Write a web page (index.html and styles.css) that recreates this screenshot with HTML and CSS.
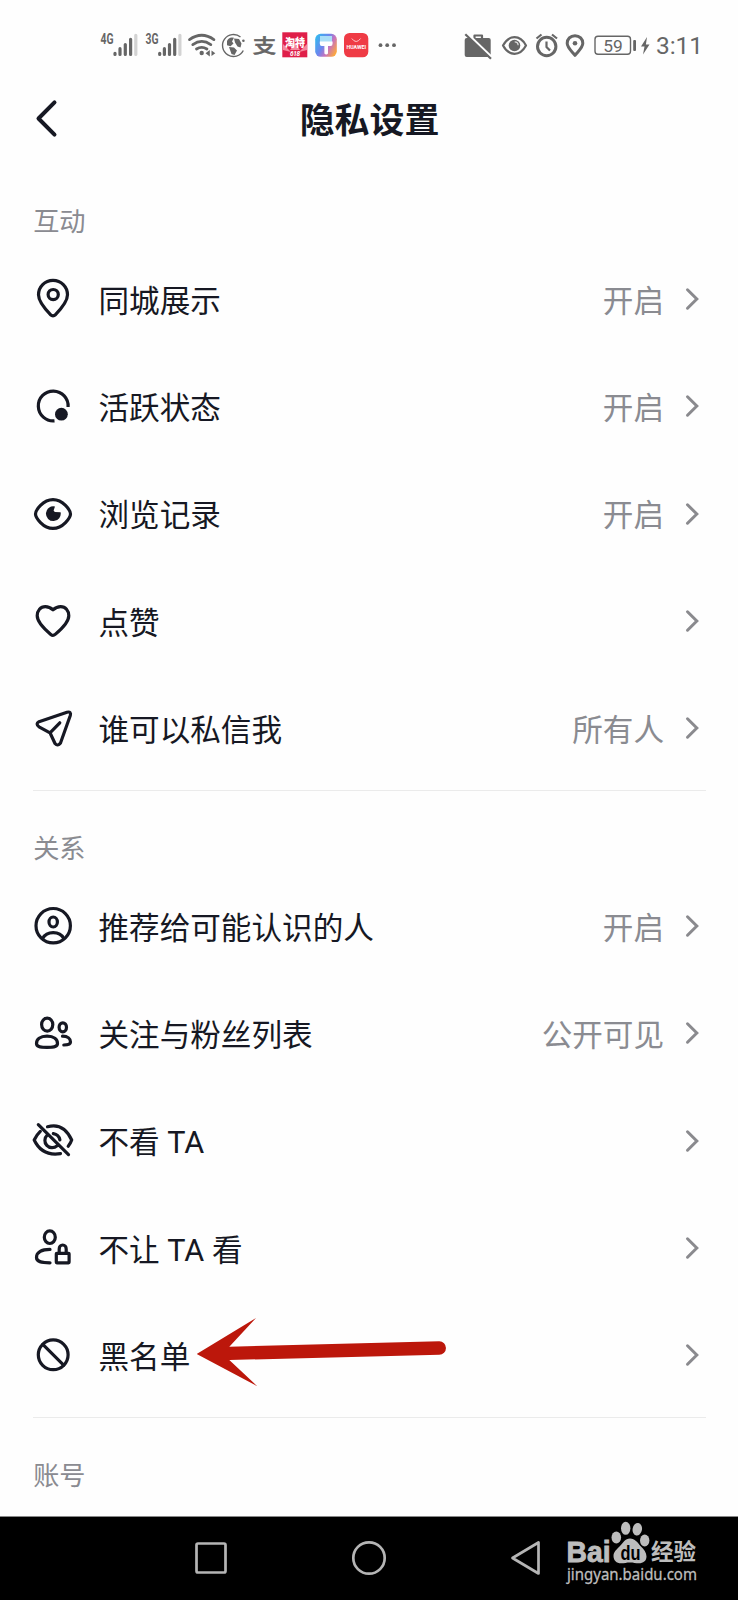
FILE: index.html
```html
<!DOCTYPE html>
<html lang="zh-CN">
<head>
<meta charset="utf-8">
<title>隐私设置</title>
<link rel="stylesheet" href="styles.css">
</head>
<body>
<div class="screen">
  <div class="status-bar">
    <svg class="status-left" viewBox="96 25 304 40" aria-hidden="true">
      <defs>
        <linearGradient id="brush" x1="0" y1="0.2" x2="1" y2="0.8">
          <stop offset="0" stop-color="#35b7ee"/><stop offset=".4" stop-color="#6b86ee"/><stop offset=".65" stop-color="#c873bd"/><stop offset="1" stop-color="#ffab35"/>
        </linearGradient>
      </defs>
      <g class="status-small">
        <text x="100.5" y="44" textLength="13" lengthAdjust="spacingAndGlyphs">4G</text>
        <text x="145.5" y="44" textLength="13" lengthAdjust="spacingAndGlyphs">3G</text>
      </g>
      <g class="bars">
        <path d="M115 53.3v1.2M120 48.7v5.8M125.3 44.5v10M130.6 39.3v15.2M159.7 53.3v1.2M164.4 48.7v5.8M169.5 44.5v10M174.7 39.3v15.2"/>
        <path class="bar-off" d="M135.8 35.3v19.2M179.9 35.3v19.2"/>
      </g>
      <path class="wifi" d="M189.5 39.6q12.2-8.6 24.4 0M192.8 44.6q9-6.4 18 0M196.5 49q5.2-3.4 10.4 0"/>
      <circle class="fill" cx="201.7" cy="53" r="2.2"/>
      <path class="fill" d="M209.8 50v6.4l-4.3-3.2zM211.5 50.4v5.6l3.8-2.8z"/>
      <path class="line thin" d="M240.5 37a11 11 0 1 0 2.8 13.5"/>
      <circle class="fill" cx="243.4" cy="40.8" r="1.3"/>
      <path class="fill" d="M227 41q2-4.600 7-3.200l-2 3.700 1.500 2-3 2.700-3.500-1zM234 38.500l5 .5 2.500 4.500-1 4-3-1-2.500-4zM229 47l5 .6 3 3-2.500 4.500-3-1z"/>
      <text class="alipay" x="252.800" y="53.300" textLength="23.500" lengthAdjust="spacingAndGlyphs">支</text>
      <rect x="282.300" y="32.300" width="25" height="25" fill="#df1f49"/>
      <path d="M283 44l8 8-8-2zM307 44l-8 8 8-2zM295 43l-5 7h10z" fill="#f5879c"/>
      <text class="sale" x="285" y="46.500" textLength="20" lengthAdjust="spacingAndGlyphs">淘特</text>
      <text class="sale-num" x="290" y="55.800" textLength="10">618</text>
      <rect x="315.200" y="33.800" width="21.600" height="23" rx="5.500" fill="url(#brush)"/>
      <path d="M320 36h12v6h-12z" fill="#a9def7"/>
      <path d="M319.800 41.500h12.800v2q0 2.500-2 2.500h-2.600v7.500q-1.800 2-3.600 0v-7.500h-2.600q-2 0-2-2.500z" fill="#fff"/>
      <rect x="344" y="33" width="24.300" height="24.300" rx="5.500" fill="#ef3b45"/>
      <path d="M351.800 38.500q4.400 6 8.800 0" fill="none" stroke="#ffc5c8" stroke-width="1"/>
      <text class="huawei" x="346.500" y="49.300" textLength="19.500" lengthAdjust="spacingAndGlyphs">HUAWEI</text>
      <g class="fill"><circle cx="380.500" cy="45.200" r="1.900"/><circle cx="387.200" cy="45.200" r="1.900"/><circle cx="394" cy="45.200" r="1.900"/></g>
    </svg>
    <svg class="status-right" viewBox="460 25 192 40" aria-hidden="true">
      <path class="line mid" d="M474.500 39v-3.500h7.500v3.500"/>
      <rect class="fill" x="464.700" y="38" width="26" height="19" rx="2"/>
      <path d="M467 33.500l26 25" stroke="#fff" stroke-width="2.500"/>
      <path class="line mid" d="M465.300 34.300l25.700 24.500"/>
      <path class="line mid" d="M503 45.500q4.500-8.300 11.500-8.300t11.500 8.300q-4.500 8.300-11.500 8.300t-11.500-8.300z"/>
      <circle class="fill" cx="514.500" cy="45.500" r="5.800"/>
      <path d="M514.700 41.800a3.400 3.400 0 0 1 3.400 3.400" fill="none" stroke="#ddd" stroke-width="1.300"/>
      <circle class="line heavy" cx="546.700" cy="46.500" r="9.200"/>
      <path class="line mid" d="M546.500 41.500v5.500l3.500 3.500M536.500 38.500l5-4M557 38.500l-5-4"/>
      <path class="line heavy" d="M575 35.700c-4.700 0-7.800 3.400-7.800 7.600 0 4.400 4.600 7.900 7.800 12 3.200-4.100 7.800-7.600 7.800-12 0-4.200-3.100-7.600-7.800-7.600z"/>
      <circle class="fill" cx="575" cy="43.300" r="2.300"/>
      <rect class="line thin" x="595" y="36.300" width="35.500" height="18" rx="3"/>
      <text class="battery" x="603.300" y="51.700" textLength="19.500" lengthAdjust="spacingAndGlyphs">59</text>
      <rect class="fill" x="633.200" y="40" width="2.800" height="11" rx="1"/>
      <path class="fill" d="M647 37l-6 9.500h3.500l-1.500 8 6.500-10h-3.600z"/>
    </svg>
    <span class="clock">3:11</span>
  </div>

  <header class="title-bar">
    <svg class="back" viewBox="0 0 24 40"><path d="M20.500 3.300L4.500 19.500 20.500 35.700"/></svg>
    <h1 class="title">隐私设置</h1>
  </header>

  <main class="settings">
    <section class="section">
      <h2 class="section-label">互动</h2>
      <div class="row">
        <svg class="icon" viewBox="0 0 40 40"><path d="M20 1.300C11.800 1.300 5.500 7.800 5.500 15.800c0 7.200 6.500 14.200 12.200 20a3.200 3.200 0 0 0 4.600 0c5.700-5.800 12.200-12.800 12.200-20C34.500 7.800 28.200 1.300 20 1.300z"/><circle cx="20.200" cy="15.600" r="5.100"/></svg>
        <span class="name">同城展示</span><span class="value">开启</span>
        <svg class="chevron" viewBox="0 0 14 24"><path d="M2.500 2.800l9.300 9.200-9.300 9.200"/></svg>
      </div>
      <div class="row">
        <svg class="icon" viewBox="0 0 40 40"><path class="flat" d="M35.100 21A14.900 14.900 0 1 0 21.500 34.800"/><circle class="solid" cx="28.400" cy="28.200" r="6.400"/></svg>
        <span class="name">活跃状态</span><span class="value">开启</span>
        <svg class="chevron" viewBox="0 0 14 24"><path d="M2.500 2.800l9.300 9.200-9.300 9.200"/></svg>
      </div>
      <div class="row">
        <svg class="icon" viewBox="0 0 40 40"><path d="M2.500 20C2.500 16.500 10 5.600 20 5.600S37.500 16.500 37.500 20 30 34.400 20 34.400 2.500 23.500 2.500 20z"/><path class="solid" d="M22 12.500L20.600 16.500 21.800 18 27.600 18.200A7.400 7.400 0 1 1 22 12.500z"/></svg>
        <span class="name">浏览记录</span><span class="value">开启</span>
        <svg class="chevron" viewBox="0 0 14 24"><path d="M2.500 2.800l9.300 9.200-9.300 9.200"/></svg>
      </div>
      <div class="row">
        <svg class="icon" viewBox="0 0 40 40"><path d="M20 8.800C17.500 6.500 15 5.600 12.300 5.600 7.500 5.600 4.200 9.500 4.200 14.800 4.200 22 12.500 29 17.800 33.400a3.400 3.400 0 0 0 4.400 0C27.500 29 35.800 22 35.800 14.800 35.800 9.500 32.500 5.600 27.700 5.600 25 5.600 22.500 6.500 20 8.800z"/></svg>
        <span class="name">点赞</span>
        <svg class="chevron" viewBox="0 0 14 24"><path d="M2.500 2.800l9.300 9.200-9.300 9.200"/></svg>
      </div>
      <div class="row">
        <svg class="icon" viewBox="0 0 40 40"><path d="M6 13.700L34 4.200Q38.500 3.200 37.300 7.500L27.500 35Q24.800 38.700 22 35.500L17 24.800 6 18.800Q2.200 15.800 6 13.700zM17 24.800L26.800 14.800"/></svg>
        <span class="name">谁可以私信我</span><span class="value">所有人</span>
        <svg class="chevron" viewBox="0 0 14 24"><path d="M2.500 2.800l9.300 9.200-9.300 9.200"/></svg>
      </div>
    </section>

    <section class="section">
      <h2 class="section-label">关系</h2>
      <div class="row">
        <svg class="icon" viewBox="0 0 40 40"><circle cx="20.200" cy="19.700" r="17.200"/><ellipse cx="20.200" cy="16" rx="4.200" ry="5"/><path d="M9.800 32.300C12 28 16 26.600 20.200 26.600S28.500 28 30.600 32.300"/></svg>
        <span class="name">推荐给可能认识的人</span><span class="value">开启</span>
        <svg class="chevron" viewBox="0 0 14 24"><path d="M2.500 2.800l9.300 9.200-9.300 9.200"/></svg>
      </div>
      <div class="row">
        <svg class="icon" viewBox="0 0 40 40"><ellipse cx="14.200" cy="11.600" rx="5.600" ry="6.500"/><path d="M14 23.100C7 23.100 3.500 26.500 3.500 30.500 3.500 33.500 6 34.400 14 34.400S24.500 33.500 24.500 30.500C24.500 26.500 21 23.100 14 23.100z"/><ellipse cx="29.800" cy="14.300" rx="3.700" ry="4.500"/><path d="M29.500 23.200C35 23.200 37.500 26 37.500 29 37.500 31.500 35 32 30.800 32"/></svg>
        <span class="name">关注与粉丝列表</span><span class="value">公开可见</span>
        <svg class="chevron" viewBox="0 0 14 24"><path d="M2.500 2.800l9.300 9.200-9.300 9.200"/></svg>
      </div>
      <div class="row">
        <svg class="icon" viewBox="0 0 40 40"><path d="M5.300 3.600L35.500 33.600M14.500 5.700C27 2.200 34.500 9.800 38.700 19q-1.200 3.400-3.500 6.200M7.300 10.400Q3.500 14 1.200 19 9 35.500 27.500 32.600M14.200 14.200a7.200 7.200 0 0 0 9.800 10.600M20.300 12.600q5.500.9 6.600 6.300"/></svg>
        <span class="name">不看 TA</span>
        <svg class="chevron" viewBox="0 0 14 24"><path d="M2.500 2.800l9.300 9.200-9.300 9.200"/></svg>
      </div>
      <div class="row">
        <svg class="icon" viewBox="0 0 40 40"><ellipse cx="16.800" cy="9.200" rx="5.500" ry="6.300"/><path d="M17 21.400C8 21.400 3.500 24.500 3.500 29.500 3.500 33.800 8 34.800 17 34.800"/><rect x="23.300" y="25.300" width="12.800" height="9.500" rx=".5"/><path d="M26.200 25v-4a3.500 4 0 0 1 7 0V25"/></svg>
        <span class="name">不让 TA 看</span>
        <svg class="chevron" viewBox="0 0 14 24"><path d="M2.500 2.800l9.300 9.200-9.300 9.200"/></svg>
      </div>
      <div class="row">
        <svg class="icon" viewBox="0 0 40 40"><circle cx="20.200" cy="19.800" r="14.900"/><path d="M9.800 9.400L30.600 30.200"/></svg>
        <span class="name">黑名单</span>
        <svg class="chevron" viewBox="0 0 14 24"><path d="M2.500 2.800l9.300 9.200-9.300 9.200"/></svg>
        <svg class="pointer" viewBox="196 1317 250 70"><path d="M196.700 1354L256 1318 229.300 1346.700 439.300 1341.300A6.700 6.700 0 0 1 439.300 1354.700L229.300 1360 257.300 1386.300z"/></svg>
      </div>
    </section>

    <section class="section">
      <h2 class="section-label">账号</h2>
    </section>
  </main>

  <nav class="nav-bar">
    <svg class="nav-icon" viewBox="0 0 36 36"><rect x="3.500" y="3.500" width="29" height="29" rx="1.500"/></svg>
    <svg class="nav-icon" viewBox="0 0 36 36"><circle cx="18" cy="18" r="15.700"/></svg>
    <svg class="nav-icon" viewBox="0 0 36 36"><path d="M29.500 2.500v31L3.500 18z"/></svg>
    <svg class="watermark" viewBox="560 1515 145 75">
      <text class="wm-bold" x="566.500" y="1560.500" textLength="44" lengthAdjust="spacingAndGlyphs">Bai</text>
      <ellipse cx="616.300" cy="1536.500" rx="4.800" ry="6"/>
      <ellipse cx="625.700" cy="1527.300" rx="4.700" ry="6.500"/>
      <ellipse cx="637.300" cy="1528.300" rx="4.700" ry="6.300" transform="rotate(10 637.300 1528.300)"/>
      <ellipse cx="644.700" cy="1539.500" rx="4.700" ry="6"/>
      <path d="M630 1537.500c5 0 7.500 4 10.500 7.500 3.500 3.500 6 6.500 6 10.500 0 4.500-3.500 6.800-7.500 6.800-3.500 0-5.500-.8-9-.8s-5.500.8-9 .8c-4.500 0-7.500-2.800-7.500-7.300 0-4 3-6.500 6.500-10 3.200-3.300 5-7.500 10-7.500z"/>
      <text class="wm-du" x="620.500" y="1558.500" textLength="20" lengthAdjust="spacingAndGlyphs">du</text>
      <text class="wm-cn" x="651" y="1559" textLength="45" lengthAdjust="spacingAndGlyphs">经验</text>
      <text class="wm-url" x="567" y="1579" textLength="130" lengthAdjust="spacingAndGlyphs">jingyan.baidu.com</text>
    </svg>
  </nav>
</div>
</body>
</html>
```
FILE: styles.css
```css
* { box-sizing: border-box; }

body {
  margin: 0;
  background: #fff;
  font-family: Roboto, "Noto Sans CJK SC", sans-serif;
  color: #161823;
}

.screen {
  width: 738px;
  height: 1600px;
  display: flex;
  flex-direction: column;
  overflow: hidden;
  background: #fefefe;
}

/* Status bar */
.status-bar {
  height: 90px;
  flex: none;
  display: flex;
  align-items: center;
  padding-left: 96px;
  color: #666;
}
.status-left { width: 304px; height: 40px; flex: none; }
.status-right { width: 192px; height: 40px; flex: none; margin-left: 60px; }
.clock { margin-left: 4px; font-size: 24.5px; line-height: 40px; padding-top: 2px; letter-spacing: -0.1px; }
.fill { fill: #666; }
.line { fill: none; stroke: #666; stroke-linejoin: round; }
.thin { stroke-width: 1.4; }
.mid { stroke-width: 2.2; }
.heavy { stroke-width: 3; }
.bars { stroke: #666; stroke-width: 3.2; stroke-linecap: round; }
.bar-off { stroke: #d3d3d3; }
.wifi { fill: none; stroke: #666; stroke-width: 2.8; stroke-linecap: round; }
.status-small { font: 700 14.5px Roboto, sans-serif; fill: #666; }
.alipay { font: 500 19.5px "Noto Sans CJK SC", sans-serif; fill: #666; stroke: #666; stroke-width: .5; }
.sale { font: 900 11px "Noto Sans CJK SC", sans-serif; fill: #fff; }
.sale-num { font: italic 700 6.5px Roboto, sans-serif; fill: #fff; }
.huawei { font: 700 5.5px Roboto, sans-serif; fill: #fff; }
.battery { font: 17px Roboto, sans-serif; fill: #666; }

/* Title */
.title-bar {
  height: 73.5px;
  flex: none;
  display: grid;
  grid-template-columns: 60px 1fr 60px;
  padding: 0 0 12.5px;
  align-items: center;
}
.back { width: 24px; height: 40px; margin-left: 34px; margin-top: -3px; }
.back path { fill: none; stroke: #161823; stroke-width: 4; stroke-linecap: round; stroke-linejoin: round; }
.title { margin: 0; padding: 3px 0 0 1px; text-align: center; font-size: 34.9px; line-height: 50px; font-weight: 700; }

/* Settings list */
.settings { flex: 1; min-height: 0; padding: 0 32.5px; overflow: hidden; }
.section { height: 627px; border-bottom: 1.5px solid #ebebeb; }
.section-label {
  margin: 0;
  height: 82px;
  padding: 39px 0 0 0.7px;
  font-size: 26.2px;
  line-height: 38px;
  font-weight: 400;
  color: #8a8b91;
}
.row { position: relative; height: 107.3px; display: flex; align-items: center; }
.icon { width: 40px; height: 40px; flex: none; overflow: visible; margin-right: 26px; }
.icon * { fill: none; stroke: #161823; stroke-width: 3.2; stroke-linecap: round; stroke-linejoin: round; }
.icon .solid { fill: #161823; stroke: none; }
.icon .flat { stroke-linecap: butt; }
.name { flex: 1; font-size: 30.6px; line-height: 44px; padding-top: 5px; }
.value { font-size: 30.6px; line-height: 44px; padding-top: 5px; color: #8a8b91; }
.chevron { width: 14px; height: 24px; flex: none; margin: 0 6.5px 0 21px; }
.chevron path { fill: none; stroke: #8a8a8e; stroke-width: 3; stroke-linecap: round; stroke-linejoin: miter; }

/* Arrow drawn over the blocklist row */
.pointer { position: absolute; left: 163.5px; top: 15.5px; width: 250px; height: 70px; }
.pointer path { fill: #bc170b; }

/* System navigation */
.nav-bar {
  position: relative;
  height: 84px;
  flex: none;
  background: #000;
  border-top: 1px solid #888;
  display: flex;
  align-items: center;
  gap: 122px;
  padding: 0 0 2px 193px;
}
.nav-icon { width: 36px; height: 36px; flex: none; }
.nav-icon * { fill: none; stroke: #b5b5b5; stroke-width: 2.7; stroke-linejoin: round; }
.watermark { position: absolute; left: 560px; top: -1.5px; width: 145px; height: 75px; overflow: visible; fill: #bdbdbd; }
.wm-bold { font: 700 29px "Liberation Sans", sans-serif; stroke: #bdbdbd; stroke-width: .9; }
.wm-du { font: 700 20px "Liberation Sans", sans-serif; fill: #000; }
.wm-cn { font: 700 23px "Noto Sans CJK SC", sans-serif; }
.wm-url { font: 16.5px "Noto Sans", sans-serif; stroke: #bdbdbd; stroke-width: .3; }
```
